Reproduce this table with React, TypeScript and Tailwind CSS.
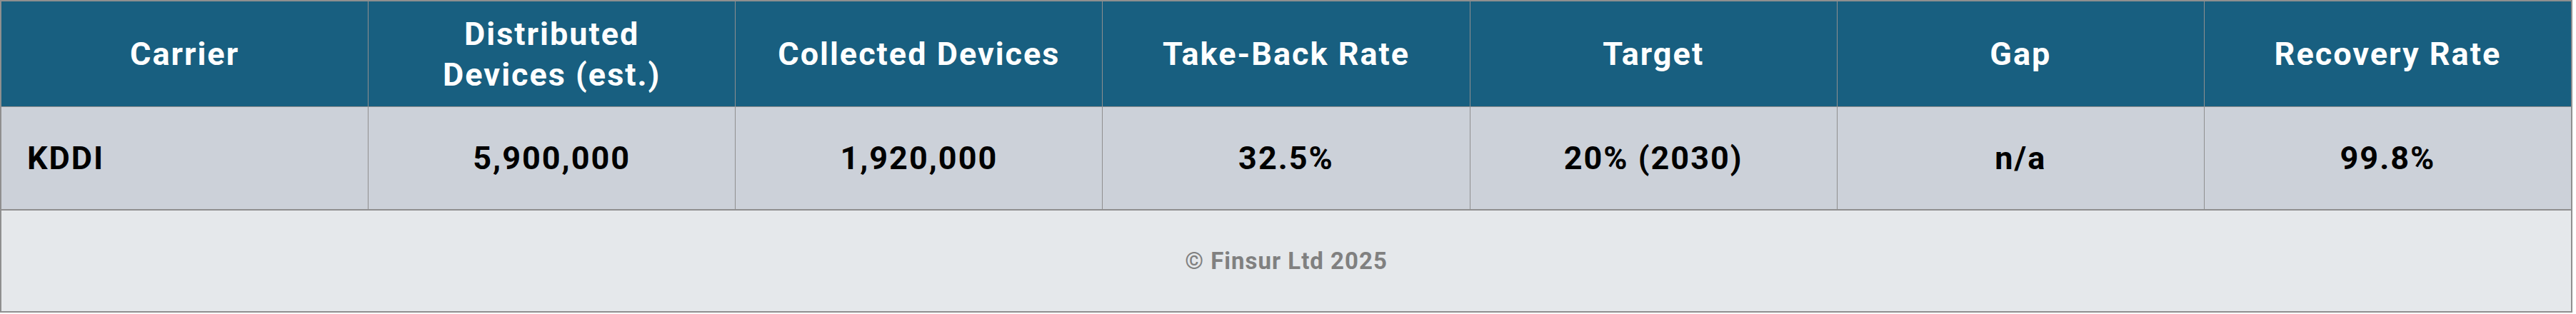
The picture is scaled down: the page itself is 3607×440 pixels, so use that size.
const headers = [
  "Carrier",
  "Distributed Devices (est.)",
  "Collected Devices",
  "Take-Back Rate",
  "Target",
  "Gap",
  "Recovery Rate",
]

const row = ["KDDI", "5,900,000", "1,920,000", "32.5%", "20% (2030)", "n/a", "99.8%"]

export default function App() {
  return (
    <div className="bg-white" style={{ fontFamily: "Roboto, 'Liberation Sans', sans-serif" }}>
      <div className="w-[3602px] border-2 border-[#8f8f8f]">
        {/* header */}
        <div className="grid grid-cols-7 gap-x-px bg-[#8f8f8f] border-b border-[#8f8f8f]">
          {headers.map((h, i) => (
            <div
              key={i}
              className="h-[147px] bg-[#185f80] flex items-center justify-center px-12 text-center text-white font-bold text-[45px] leading-[57px] tracking-[2px]"
            >
              {h}
            </div>
          ))}
        </div>

        {/* data row */}
        <div className="grid grid-cols-7 gap-x-px bg-[#8f8f8f] border-b-2 border-[#8f8f8f]">
          {row.map((v, i) => (
            <div
              key={i}
              className={
                i === 0
                  ? "h-[143px] bg-[#ccd1d9] flex items-center pl-9 text-black font-bold text-[45px] tracking-[2px]"
                  : "h-[143px] bg-[#ccd1d9] flex items-center justify-center text-black font-bold text-[45px] tracking-[2px]"
              }
            >
              {v}
            </div>
          ))}
        </div>

        {/* footer */}
        <div className="h-[141px] bg-[#e5e8eb] flex items-center justify-center text-[#808080] font-bold text-[33px] tracking-[1px]">
          © Finsur Ltd 2025
        </div>
      </div>
    </div>
  )
}
